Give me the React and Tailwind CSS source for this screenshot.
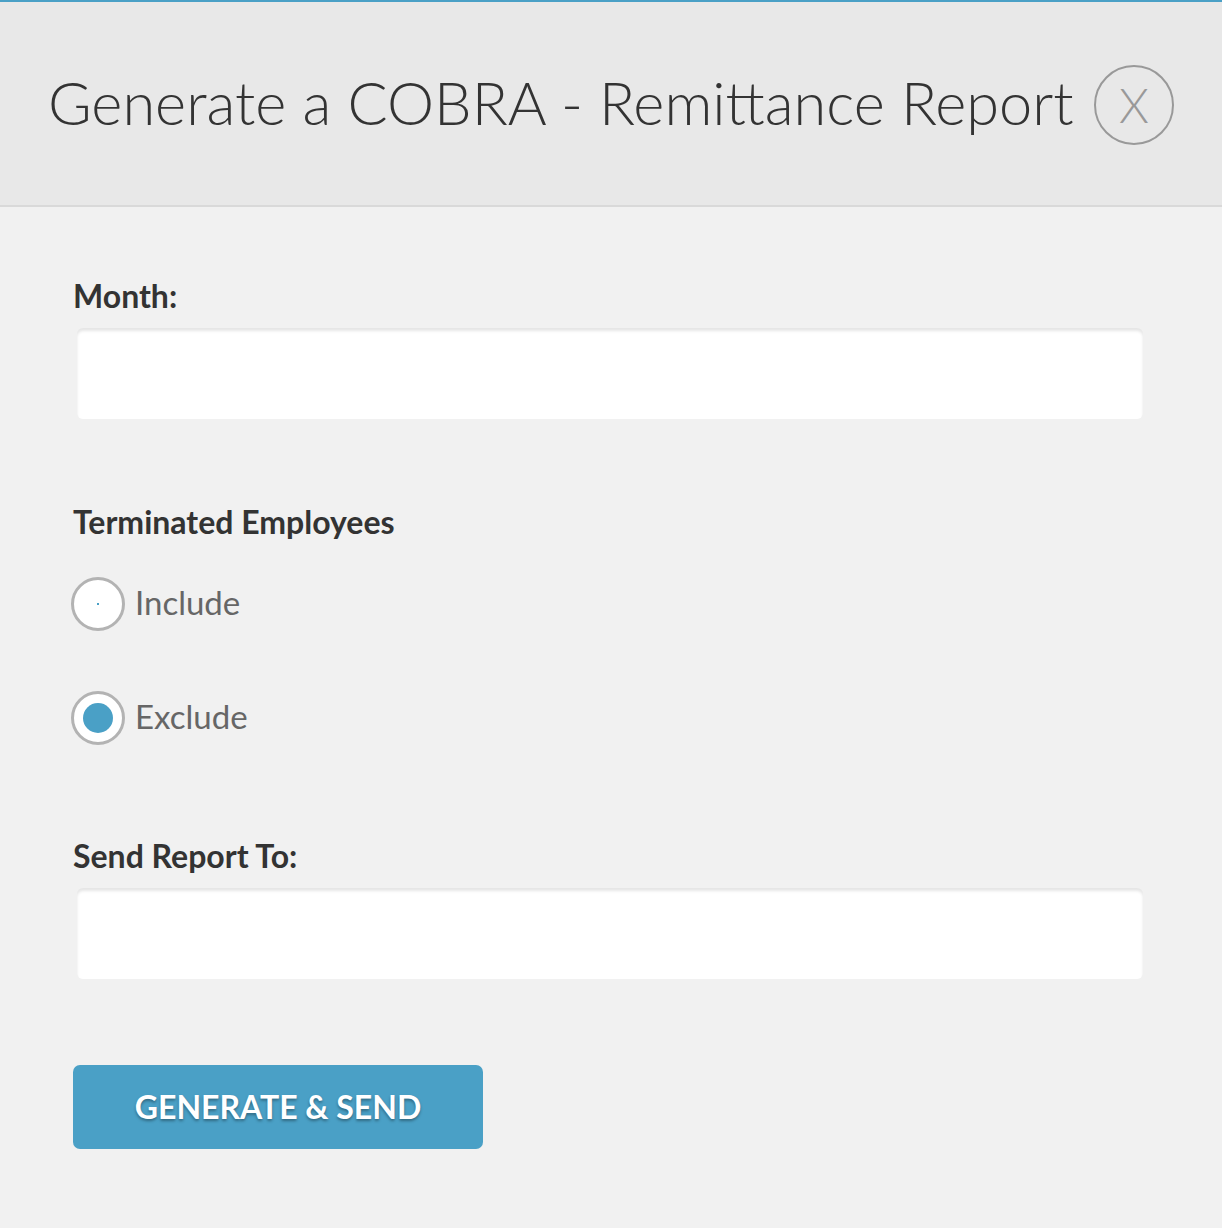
import React, { useState } from "react";

const Radio = ({ checked, label, onClick }) => (
  <button
    type="button"
    onClick={onClick}
    className="flex items-center gap-[10px] text-left"
  >
    <span className="w-[54px] h-[54px] rounded-full border-[3px] border-[#b3b3b3] bg-white flex items-center justify-center shrink-0">
      {checked ? (
        <span className="w-[30px] h-[30px] rounded-full bg-[#4aa0c6]" />
      ) : (
        <span className="w-[2px] h-[2px] bg-[#4aa0c6]" />
      )}
    </span>
    <span className="text-[33px] leading-[36px] text-[#666] -mt-[4px]">{label}</span>
  </button>
);

const App = () => {
  const [terminated, setTerminated] = useState("exclude");
  const [month, setMonth] = useState("");
  const [sendTo, setSendTo] = useState("");

  return (
    <div
      className="min-h-[1228px] bg-[#f1f1f1] border-t-2 border-[#4aa0c6]"
      style={{ fontFamily: "Lato, 'Open Sans', sans-serif" }}
    >
      {/* Header */}
      <div className="h-[205px] bg-[#e8e8e8] border-b-2 border-[#d9d9d9] flex items-center justify-between pl-[48px] pr-[48px]">
        <h1 className="text-[59.5px] font-light text-[#333] -mt-[2px]">
          Generate a COBRA - Remittance Report
        </h1>
        <button className="w-[80px] h-[80px] mt-[2px] rounded-full border-2 border-[#999] flex items-center justify-center text-[48px] font-light text-[#999] leading-none">
          X
        </button>
      </div>

      {/* Form */}
      <div className="pl-[73px] pt-[71px]">
        <label className="block text-[32px] leading-[36px] font-bold text-[#333]">
          Month:
        </label>
        <input
          type="text"
          value={month}
          onChange={(e) => setMonth(e.target.value)}
          className="mt-[14px] ml-[4px] w-[1066px] h-[91px] bg-white rounded-[6px] shadow-[inset_0_3px_3px_rgba(0,0,0,0.1)] outline-none px-4 text-[28px]"
        />

        <div className="mt-[85px] text-[32px] leading-[36px] font-bold text-[#333]">
          Terminated Employees
        </div>
        <div className="mt-[37px] -ml-[2px] flex flex-col gap-[60px]">
          <Radio
            label="Include"
            checked={terminated === "include"}
            onClick={() => setTerminated("include")}
          />
          <Radio
            label="Exclude"
            checked={terminated === "exclude"}
            onClick={() => setTerminated("exclude")}
          />
        </div>

        <label className="block mt-[93px] text-[32px] leading-[36px] font-bold text-[#333]">
          Send Report To:
        </label>
        <input
          type="text"
          value={sendTo}
          onChange={(e) => setSendTo(e.target.value)}
          className="mt-[14px] ml-[4px] w-[1066px] h-[91px] bg-white rounded-[6px] shadow-[inset_0_3px_3px_rgba(0,0,0,0.1)] outline-none px-4 text-[28px]"
        />

        <button className="mt-[86px] w-[410px] h-[84px] rounded-[7px] bg-[#4aa0c6] text-white text-[32px] font-bold uppercase [text-shadow:0_2px_3px_rgba(0,0,0,0.35)]">
          Generate &amp; Send
        </button>
      </div>
    </div>
  );
};

export default App;
